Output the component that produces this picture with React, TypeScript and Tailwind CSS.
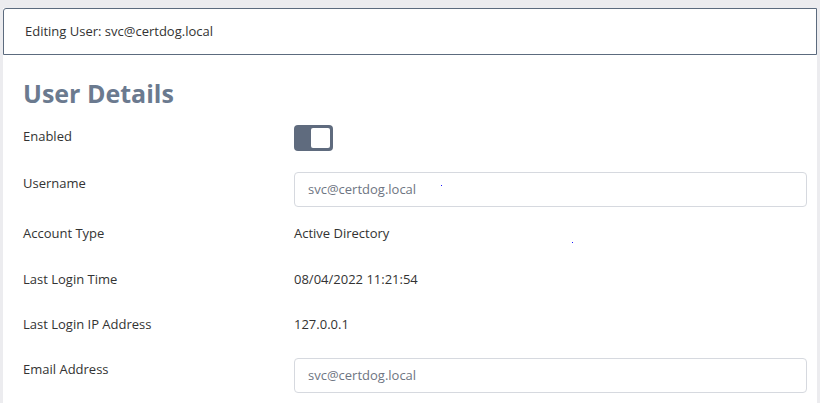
import React from 'react';

const font = { fontFamily: '"Open Sans", "Noto Sans", sans-serif' };

function Row({ label, children, className = '' }: { label: string; children: React.ReactNode; className?: string }) {
  return (
    <div className={`flex items-start ${className}`}>
      <div className="w-[271px] shrink-0 pt-px text-[13px] leading-5 text-[#333]">{label}</div>
      <div className="flex-1">{children}</div>
    </div>
  );
}

export default function App() {
  return (
    <div className="h-[403px] w-[820px] overflow-hidden bg-[#ececef] pt-2 pl-[3px] pr-[3px]" style={font}>
      <div className="relative h-full bg-white">
        {/* Header */}
        <div className="flex h-[47px] items-center rounded-tl-[3px] border border-[#5c6b7e] bg-white pl-[21px] pt-px text-[13px] text-[#333]">
          Editing User: svc@certdog.local
        </div>

        {/* Body */}
        <div className="pl-5 pr-[10px]">
          <h1 className="mt-[22px] text-[25px] font-bold leading-8 text-[#6b7a8f]">User Details</h1>

          <Row label="Enabled" className="mt-4">
            <div className="flex h-[26px] w-[39px] items-center justify-end rounded-[4px] bg-[#5f6b7e] pr-[3px]">
              <div className="h-[20px] w-[19px] rounded-[2px] bg-white" />
            </div>
          </Row>

          <Row label="Username" className="mt-[21px]">
            <div className="flex h-[35px] items-center rounded-[4px] border border-[#d6d9df] px-[13px] text-[13px] text-[#6e7582]">
              svc@certdog.local
            </div>
          </Row>

          <Row label="Account Type" className="mt-[15px]">
            <div className="pt-px text-[13px] leading-5 text-[#333]">Active Directory</div>
          </Row>

          <Row label="Last Login Time" className="mt-[25px]">
            <div className="pt-px text-[13px] leading-5 text-[#333]">08/04/2022 11:21:54</div>
          </Row>

          <Row label="Last Login IP Address" className="mt-[24px]">
            <div className="pt-px text-[13px] leading-5 text-[#333]">127.0.0.1</div>
          </Row>

          <Row label="Email Address" className="mt-[24px]">
            <div className="flex h-[35px] items-center rounded-[4px] border border-[#d6d9df] px-[13px] text-[13px] text-[#6e7582]">
              svc@certdog.local
            </div>
          </Row>
        </div>

        {/* stray cursor dots */}
        <span className="absolute left-[438px] top-[177px] h-px w-px bg-[#1a1aff]" />
        <span className="absolute left-[569px] top-[234px] h-px w-px bg-[#1a1aff]" />
      </div>
    </div>
  );
}
